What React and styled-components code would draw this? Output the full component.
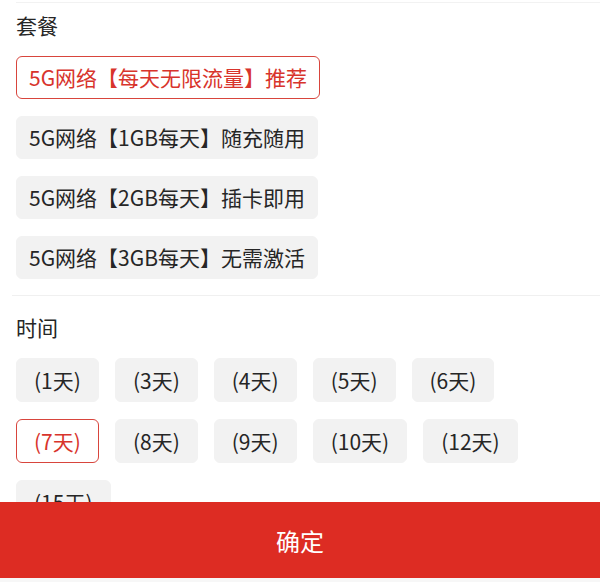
import styled, { createGlobalStyle } from "styled-components"
import { useState } from "react"

const GlobalStyle = createGlobalStyle`
  html, body {
    margin: 0;
    padding: 0;
    background: #fff;
    font-family: "Noto Sans CJK SC", "Noto Sans", sans-serif;
    color: #262626;
  }
`

const Page = styled.div`
  padding-top: 2px;
`
const TopLine = styled.div`
  margin-left: 16px;
  border-top: 1px solid #f2f2f2;
`
const Section = styled.section`
  padding: 0 16px;
`
const Title = styled.h3`
  margin: ${p => p.$top}px 0 0;
  font-size: 21px;
  font-weight: 400;
  line-height: 30px;
  color: #262626;
`
const PlanList = styled.div`
  display: flex;
  flex-direction: column;
  align-items: flex-start;
  gap: 17px;
  margin-top: 16px;
`
const Chip = styled.button`
  box-sizing: border-box;
  height: ${p => p.$h}px;
  padding: 0 ${p => p.$pad}px;
  font-family: inherit;
  font-size: 21px;
  line-height: 1;
  border-radius: 6px;
  cursor: pointer;
  white-space: nowrap;
  background: ${p => (p.$active ? "#fff" : "#f2f2f2")};
  color: ${p => (p.$active ? "#d8342c" : "#262626")};
  border: 1.5px solid ${p => (p.$active ? "#d8453d" : "#f2f2f2")};
`
const Divider = styled.div`
  margin: 16px 0 0 12px;
  border-top: 1px solid #f0f0f0;
`
const DayGrid = styled.div`
  display: flex;
  flex-wrap: wrap;
  gap: 17px 16px;
  margin-top: 16px;
`
const Footer = styled.div`
  position: fixed;
  left: 0;
  right: 0;
  bottom: 4px;
  height: 76px;
  background: #dd2c23;
  display: flex;
  align-items: center;
  justify-content: center;
`
const FooterBtn = styled.button`
  background: none;
  border: none;
  color: #fff;
  font-family: inherit;
  font-size: 24px;
  cursor: pointer;
`
const FooterGap = styled.div`
  position: fixed;
  left: 0;
  right: 0;
  bottom: 0;
  height: 4px;
  background: #f7f7f7;
`

const plans = [
  "5G网络【每天无限流量】推荐",
  "5G网络【1GB每天】随充随用",
  "5G网络【2GB每天】插卡即用",
  "5G网络【3GB每天】无需激活",
]
const days = [1, 3, 4, 5, 6, 7, 8, 9, 10, 12, 15]

const App = () => {
  const [plan, setPlan] = useState(0)
  const [day, setDay] = useState(7)

  return (
    <>
      <GlobalStyle />
      <Page>
        <TopLine />
        <Section>
          <Title $top={7}>套餐</Title>
          <PlanList>
            {plans.map((p, i) => (
              <Chip key={p} $h={43} $pad={12} $active={plan === i} onClick={() => setPlan(i)}>
                {p}
              </Chip>
            ))}
          </PlanList>
        </Section>
        <Divider />
        <Section>
          <Title $top={16}>时间</Title>
          <DayGrid>
            {days.map(d => (
              <Chip key={d} $h={44} $pad={17} $active={day === d} onClick={() => setDay(d)}>
                ({d}天)
              </Chip>
            ))}
          </DayGrid>
        </Section>
      </Page>
      <Footer>
        <FooterBtn>确定</FooterBtn>
      </Footer>
      <FooterGap />
    </>
  )
}

export default App
